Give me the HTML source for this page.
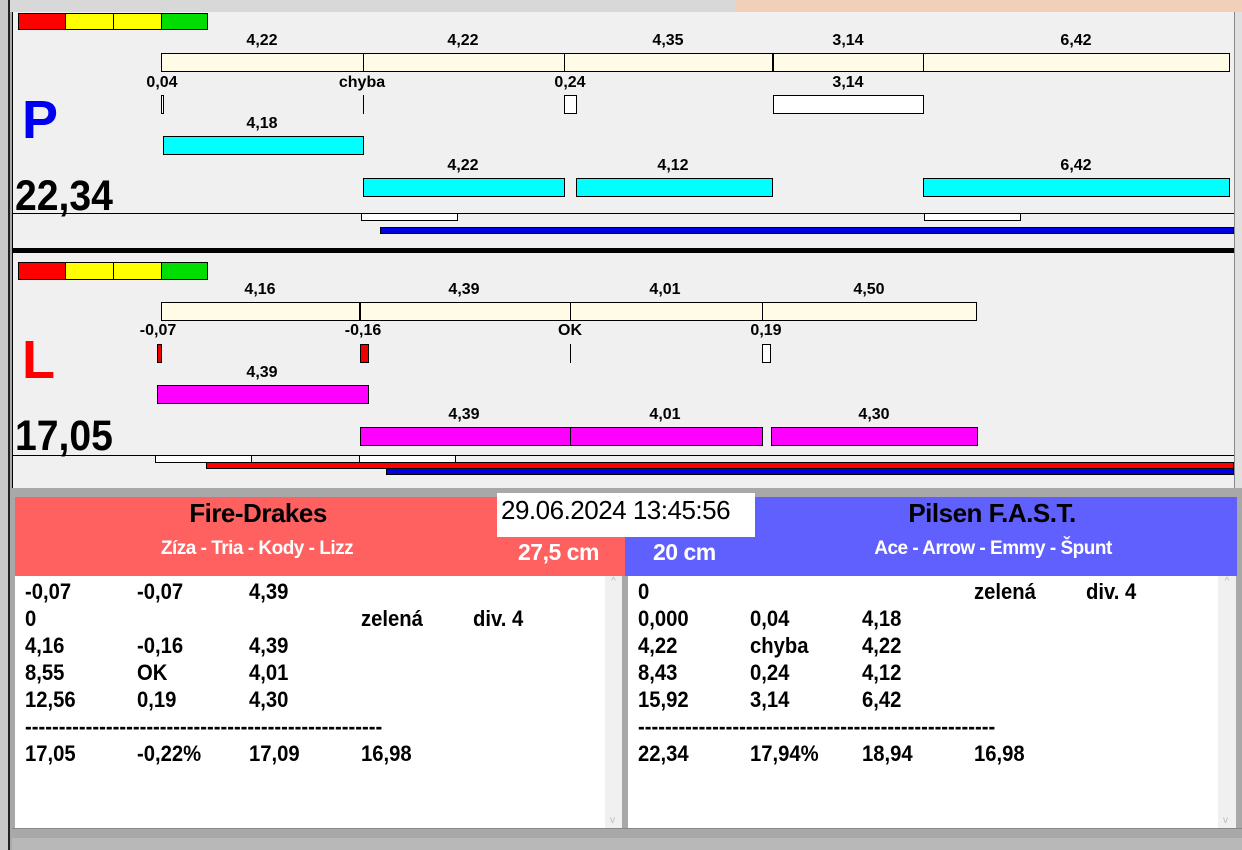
<!DOCTYPE html>
<html><head><meta charset="utf-8"><style>
*{margin:0;padding:0;box-sizing:border-box}
body{width:1242px;height:850px;background:#a8a8a8;position:relative;overflow:hidden;font-family:"Liberation Sans",Arial,sans-serif}
div{position:absolute}
.lb{font-weight:bold;font-size:16px;color:#000;transform:translateX(-50%);white-space:nowrap;line-height:16px}
.r{border:1px solid #000}
.t{font-weight:bold;font-size:22px;line-height:27px;white-space:nowrap;transform:scaleX(0.92);transform-origin:0 0}
.big{font-size:43px;font-weight:bold;line-height:46px;transform:scaleX(0.91);transform-origin:0 0}
</style></head><body>
<div style="left:0;top:0;width:1242px;height:12px;background:#d8d8d8"></div>
<div style="left:735px;top:0;width:507px;height:12px;background:#f0d0b8"></div>
<div style="left:0;top:0;width:10px;height:850px;background:#c8c8c8;border-right:2px solid #222"></div>
<div style="left:12px;top:12px;width:1222px;height:236px;background:#f0f0f0;border-left:1px solid #000"></div>
<div style="left:1234px;top:12px;width:8px;height:480px;background:#e0e0e0;border-left:1px solid #888"></div>
<div style="left:18px;top:13px;width:48px;height:17px;background:#f00" class="r"></div>
<div style="left:65px;top:13px;width:49px;height:17px;background:#ff0" class="r"></div>
<div style="left:113px;top:13px;width:49px;height:17px;background:#ff0" class="r"></div>
<div style="left:161px;top:13px;width:47px;height:17px;background:#0d0" class="r"></div>

<div class="lb" style="left:262px;top:33px">4,22</div>
<div class="lb" style="left:463px;top:33px">4,22</div>
<div class="lb" style="left:668px;top:33px">4,35</div>
<div class="lb" style="left:848px;top:33px">3,14</div>
<div class="lb" style="left:1076px;top:33px">6,42</div>
<div class="r" style="left:161px;top:53px;width:1069px;height:19px;background:#fffbe6"></div>
<div style="left:363px;top:53px;width:1px;height:19px;background:#000"></div>
<div style="left:564px;top:53px;width:1px;height:19px;background:#000"></div>
<div style="left:772px;top:53px;width:2px;height:19px;background:#000"></div>
<div style="left:923px;top:53px;width:1px;height:19px;background:#000"></div>

<div class="lb" style="left:162px;top:75px">0,04</div>
<div class="lb" style="left:362px;top:75px">chyba</div>
<div class="lb" style="left:570px;top:75px">0,24</div>
<div class="lb" style="left:848px;top:75px">3,14</div>
<div class="r" style="left:161px;top:95px;width:3px;height:19px;background:#fff"></div>
<div style="left:363px;top:95px;width:1px;height:19px;background:#000"></div>
<div class="r" style="left:564px;top:95px;width:13px;height:19px;background:#fff"></div>
<div class="r" style="left:773px;top:95px;width:151px;height:19px;background:#fff"></div>

<div style="left:22px;top:88px;font-size:54px;font-weight:bold;color:#0000f0;line-height:64px">P</div>
<div class="lb" style="left:262px;top:116px">4,18</div>
<div class="r" style="left:163px;top:136px;width:201px;height:19px;background:#0ff"></div>
<div class="lb" style="left:463px;top:158px">4,22</div>
<div class="lb" style="left:673px;top:158px">4,12</div>
<div class="lb" style="left:1076px;top:158px">6,42</div>
<div class="r" style="left:363px;top:178px;width:202px;height:19px;background:#0ff"></div>
<div class="r" style="left:576px;top:178px;width:197px;height:19px;background:#0ff"></div>
<div class="r" style="left:923px;top:178px;width:307px;height:19px;background:#0ff"></div>
<div class="big" style="left:15px;top:173px">22,34</div>
<div style="left:12px;top:213px;width:1222px;height:1px;background:#000"></div>
<div class="r" style="left:361px;top:213px;width:97px;height:8px;background:#fff"></div>
<div class="r" style="left:924px;top:213px;width:97px;height:8px;background:#fff"></div>
<div style="left:380px;top:227px;width:854px;height:7px;background:#0000e0;border:1px solid #000"></div>
<div style="left:12px;top:248px;width:1222px;height:5px;background:#000"></div>

<div style="left:12px;top:253px;width:1222px;height:235px;background:#f0f0f0;border-left:1px solid #000"></div>
<div style="left:18px;top:262px;width:48px;height:18px;background:#f00" class="r"></div>
<div style="left:65px;top:262px;width:49px;height:18px;background:#ff0" class="r"></div>
<div style="left:113px;top:262px;width:49px;height:18px;background:#ff0" class="r"></div>
<div style="left:161px;top:262px;width:47px;height:18px;background:#0d0" class="r"></div>

<div class="lb" style="left:260px;top:282px">4,16</div>
<div class="lb" style="left:464px;top:282px">4,39</div>
<div class="lb" style="left:665px;top:282px">4,01</div>
<div class="lb" style="left:869px;top:282px">4,50</div>
<div class="r" style="left:161px;top:302px;width:816px;height:19px;background:#fffbe6"></div>
<div style="left:359px;top:302px;width:2px;height:19px;background:#000"></div>
<div style="left:570px;top:302px;width:1px;height:19px;background:#000"></div>
<div style="left:762px;top:302px;width:1px;height:19px;background:#000"></div>

<div class="lb" style="left:158px;top:323px">-0,07</div>
<div class="lb" style="left:363px;top:323px">-0,16</div>
<div class="lb" style="left:570px;top:323px">OK</div>
<div class="lb" style="left:766px;top:323px">0,19</div>
<div class="r" style="left:157px;top:344px;width:5px;height:19px;background:#e00"></div>
<div class="r" style="left:360px;top:344px;width:9px;height:19px;background:#e00"></div>
<div style="left:570px;top:344px;width:1px;height:19px;background:#000"></div>
<div class="r" style="left:762px;top:344px;width:9px;height:19px;background:#fff"></div>

<div style="left:22px;top:328px;font-size:54px;font-weight:bold;color:#f00;line-height:64px">L</div>
<div class="lb" style="left:262px;top:365px">4,39</div>
<div class="r" style="left:157px;top:385px;width:212px;height:19px;background:#f0f"></div>
<div class="lb" style="left:464px;top:407px">4,39</div>
<div class="lb" style="left:665px;top:407px">4,01</div>
<div class="lb" style="left:874px;top:407px">4,30</div>
<div class="r" style="left:360px;top:427px;width:211px;height:19px;background:#f0f"></div>
<div class="r" style="left:570px;top:427px;width:193px;height:19px;background:#f0f"></div>
<div class="r" style="left:771px;top:427px;width:207px;height:19px;background:#f0f"></div>
<div class="big" style="left:15px;top:413px">17,05</div>
<div style="left:12px;top:455px;width:1222px;height:1px;background:#000"></div>
<div class="r" style="left:155px;top:455px;width:97px;height:8px;background:#fff"></div>
<div class="r" style="left:359px;top:455px;width:97px;height:8px;background:#fff"></div>
<div style="left:206px;top:462px;width:1028px;height:7px;background:#f00;border:1px solid #000"></div>
<div style="left:386px;top:468px;width:848px;height:7px;background:#0000e0;border:1px solid #000"></div>

<div style="left:12px;top:488px;width:1230px;height:362px;background:#a8a8a8"></div>
<div style="left:15px;top:497px;width:610px;height:79px;background:#ff6060"></div>
<div style="left:625px;top:497px;width:612px;height:79px;background:#6060ff"></div>
<div style="left:497px;top:493px;width:258px;height:44px;background:#fff;font-size:26px;line-height:34px;padding-left:4px;letter-spacing:-0.5px;white-space:nowrap">29.06.2024 13:45:56</div>
<div style="left:258px;top:498px;transform:translateX(-50%);font-size:26px;font-weight:bold;line-height:30px;letter-spacing:-0.5px">Fire-Drakes</div>
<div style="left:257px;top:538px;transform:translateX(-50%);font-size:19px;font-weight:bold;color:#fff;line-height:22px;letter-spacing:-0.5px;white-space:nowrap">Zíza - Tria - Kody - Lizz</div>
<div style="left:518px;top:538px;font-size:23px;font-weight:bold;color:#fff;line-height:28px;letter-spacing:-0.5px">27,5 cm</div>
<div style="left:653px;top:538px;font-size:23px;font-weight:bold;color:#fff;line-height:28px;letter-spacing:-0.5px">20 cm</div>
<div style="left:992px;top:498px;transform:translateX(-50%);font-size:26px;font-weight:bold;line-height:30px;letter-spacing:-0.5px;white-space:nowrap">Pilsen F.A.S.T.</div>
<div style="left:993px;top:538px;transform:translateX(-50%);font-size:19px;font-weight:bold;color:#fff;line-height:22px;letter-spacing:-0.5px;white-space:nowrap">Ace - Arrow - Emmy - Špunt</div>

<div style="left:15px;top:576px;width:590px;height:252px;background:#fff"></div>
<div style="left:605px;top:576px;width:17px;height:252px;background:#f0f0f0;color:#bbb;font-size:10px;text-align:center">^<div style="left:5px;bottom:2px">v</div></div>
<div style="left:628px;top:576px;width:590px;height:252px;background:#fff"></div>
<div style="left:1218px;top:576px;width:18px;height:252px;background:#f0f0f0;color:#bbb;font-size:10px;text-align:center">^<div style="left:5px;bottom:2px">v</div></div>
<div style="left:12px;top:828px;width:1230px;height:1px;background:#888"></div>
<div style="left:12px;top:838px;width:1230px;height:12px;background:#b8b8b8"></div>

<div class="t" style="left:25px;top:578px">-0,07<br>0<br>4,16<br>8,55<br>12,56<br>-----------------------------------------------------<br>17,05</div>
<div class="t" style="left:137px;top:578px">-0,07<br><br>-0,16<br>OK<br>0,19<br><br>-0,22%</div>
<div class="t" style="left:249px;top:578px">4,39<br><br>4,39<br>4,01<br>4,30<br><br>17,09</div>
<div class="t" style="left:361px;top:578px"><br>zelená<br><br><br><br><br>16,98</div>
<div class="t" style="left:473px;top:578px"><br>div. 4</div>

<div class="t" style="left:638px;top:578px">0<br>0,000<br>4,22<br>8,43<br>15,92<br>-----------------------------------------------------<br>22,34</div>
<div class="t" style="left:750px;top:578px"><br>0,04<br>chyba<br>0,24<br>3,14<br><br>17,94%</div>
<div class="t" style="left:862px;top:578px"><br>4,18<br>4,22<br>4,12<br>6,42<br><br>18,94</div>
<div class="t" style="left:974px;top:578px">zelená<br><br><br><br><br><br>16,98</div>
<div class="t" style="left:1086px;top:578px">div. 4</div>
</body></html>
